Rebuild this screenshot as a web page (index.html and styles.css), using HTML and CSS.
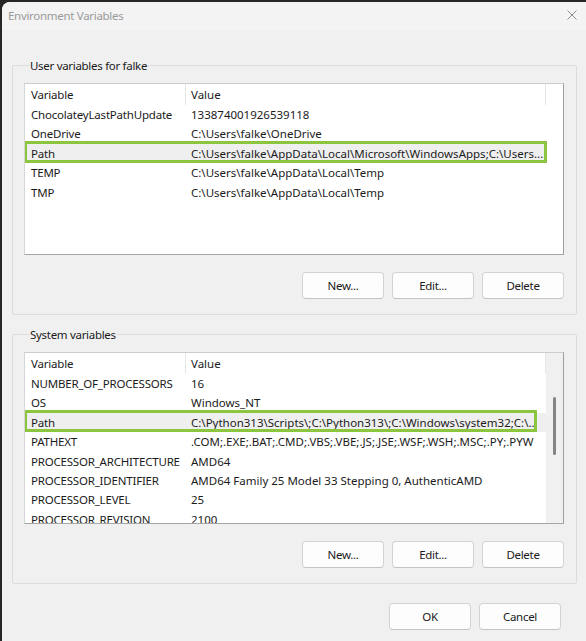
FILE: index.html
```html
<!DOCTYPE html>
<html>
<head>
<meta charset="utf-8">
<link rel="stylesheet" href="styles.css">
</head>
<body>
<div class="window">
  <div class="titlebar">
    <span class="title">Environment Variables</span>
    <svg class="close" width="10" height="10" viewBox="0 0 10 10"><path d="M0.5 0.5 L9.5 9.5 M9.5 0.5 L0.5 9.5" stroke="#8e8e8e" stroke-width="1" fill="none"/></svg>
  </div>
  <div class="content">
    <fieldset class="group">
      <legend>User variables for falke</legend>
      <div class="list">
        <div class="cols">
          <div class="row head"><span class="c1">Variable</span><span class="c2">Value</span></div>
          <div class="row"><span class="c1">ChocolateyLastPathUpdate</span><span class="c2">133874001926539118</span></div>
          <div class="row"><span class="c1">OneDrive</span><span class="c2">C:\Users\falke\OneDrive</span></div>
          <div class="row sel mark-user"><span class="c1">Path</span><span class="c2">C:\Users\falke\AppData\Local\Microsoft\WindowsApps;C:\Users...</span></div>
          <div class="row"><span class="c1">TEMP</span><span class="c2">C:\Users\falke\AppData\Local\Temp</span></div>
          <div class="row"><span class="c1">TMP</span><span class="c2">C:\Users\falke\AppData\Local\Temp</span></div>
        </div>
        <div class="filler"></div>
      </div>
      <div class="buttons">
        <button class="btn">New...</button>
        <button class="btn">Edit...</button>
        <button class="btn">Delete</button>
      </div>
    </fieldset>
    <fieldset class="group second">
      <legend>System variables</legend>
      <div class="list">
        <div class="cols">
          <div class="row head"><span class="c1">Variable</span><span class="c2">Value</span></div>
          <div class="row"><span class="c1">NUMBER_OF_PROCESSORS</span><span class="c2">16</span></div>
          <div class="row"><span class="c1">OS</span><span class="c2">Windows_NT</span></div>
          <div class="row sel mark-sys"><span class="c1">Path</span><span class="c2">C:\Python313\Scripts\;C:\Python313\;C:\Windows\system32;C:\...</span></div>
          <div class="row"><span class="c1">PATHEXT</span><span class="c2">.COM;.EXE;.BAT;.CMD;.VBS;.VBE;.JS;.JSE;.WSF;.WSH;.MSC;.PY;.PYW</span></div>
          <div class="row"><span class="c1">PROCESSOR_ARCHITECTURE</span><span class="c2">AMD64</span></div>
          <div class="row"><span class="c1">PROCESSOR_IDENTIFIER</span><span class="c2">AMD64 Family 25 Model 33 Stepping 0, AuthenticAMD</span></div>
          <div class="row"><span class="c1">PROCESSOR_LEVEL</span><span class="c2">25</span></div>
          <div class="row"><span class="c1">PROCESSOR_REVISION</span><span class="c2">2100</span></div>
        </div>
        <div class="scrollbar"><div class="thumb"></div></div>
      </div>
      <div class="buttons">
        <button class="btn">New...</button>
        <button class="btn">Edit...</button>
        <button class="btn">Delete</button>
      </div>
    </fieldset>
    <div class="footer">
      <button class="btn">OK</button>
      <button class="btn">Cancel</button>
    </div>
  </div>
</div>
</body>
</html>
```

FILE: styles.css
```css
* { box-sizing: border-box; }
html, body { margin: 0; padding: 0; }
body {
  background: #262626;
  width: 586px;
  height: 641px;
  overflow: hidden;
  font-family: "Noto Sans", "Open Sans", sans-serif;
  font-size: 11.5px;
  letter-spacing: -0.3px;
  color: #1b1b1b;
}
.window {
  margin: 2px 0 0 2px;
  width: 584px;
  height: 639px;
  background: #f0f0f0;
  border-top-left-radius: 8px;
  overflow: hidden;
}
.titlebar {
  height: 28px;
  background: #f3f3f3;
  display: flex;
  align-items: center;
  justify-content: space-between;
  padding: 0 9px 2px 6px;
}
.title { color: #9a9a9a; }
.close { display: block; }
.content {
  padding: 28px 0 0 0;
}
.group {
  margin: 0 9px 0 10px;
  padding: 10px 12px 15px 11px;
  border: 1px solid #dcdcdc;
  border-radius: 2px;
  min-width: 0;
}
.group.second { margin-top: 12px; }
.group legend {
  padding: 0 1px;
  margin-left: 5px;
  line-height: 15px;
  color: #1b1b1b;
}
.list {
  display: flex;
  height: 172px;
  background: #fff;
  border: 1px solid #b8b8b8;
  border-top-color: #cdcdcd;
  border-left-color: #d6d6d6;
  border-right-color: #9e9e9e;
  border-bottom-color: #a6a6a6;
  overflow: hidden;
}
.cols { width: 521px; flex: none; }
.filler { flex: 1; }
.row {
  display: flex;
  height: 19.4px;
  line-height: 19.4px;
  white-space: nowrap;
  position: relative;
}
.row.head { height: 21px; line-height: 21px; }
.c1 { width: 161px; flex: none; padding-left: 6px; overflow: hidden; letter-spacing: -0.2px; }
.c2 { width: 360px; flex: none; padding-left: 5px; overflow: hidden; letter-spacing: 0; }
.head .c1, .head .c2 { border-right: 1px solid #e6e6e6; }
.row.sel { background: #efefef; }
.mark-user::after, .mark-sys::after {
  content: "";
  position: absolute;
  left: -1px;
  top: -3px;
  bottom: 0;
  border: 3px solid #8cc63f;
}
.mark-user::after { right: -1px; }
.mark-sys::after { right: 9px; }
.scrollbar {
  flex: 1;
  background: #f0f0f0;
  position: relative;
}
.thumb {
  position: absolute;
  top: 44px;
  left: 7px;
  width: 3.4px;
  height: 58px;
  border-radius: 2px;
  background: #858585;
}
.buttons {
  display: flex;
  justify-content: flex-end;
  gap: 8px;
  margin-top: 17px;
}
.btn {
  width: 82px;
  height: 27px;
  background: #fdfdfd;
  border: 1px solid #d3d3d3;
  border-bottom-color: #c4c4c4;
  border-radius: 4px;
  font-family: inherit;
  font-size: 11.5px;
  letter-spacing: -0.3px;
  color: #1b1b1b;
  padding: 0;
}
.footer {
  display: flex;
  justify-content: flex-end;
  gap: 8px;
  margin-top: 19px;
  padding-right: 25px;
}
```
